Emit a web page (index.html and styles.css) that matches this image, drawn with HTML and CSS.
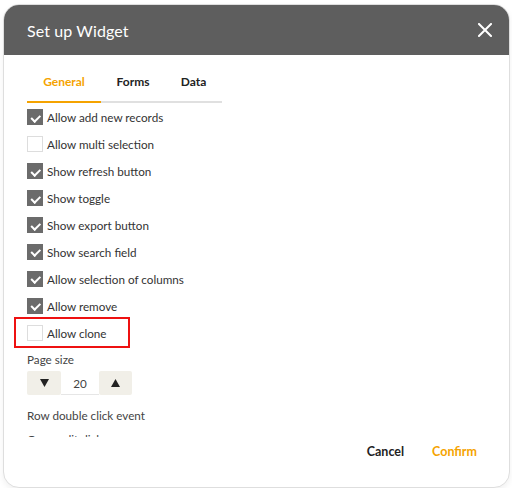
FILE: index.html
```html
<!DOCTYPE html>
<html>
<head>
<meta charset="utf-8">
<link rel="stylesheet" href="styles.css">
</head>
<body>
<div class="dialog">
  <div class="header">
    <span class="title">Set up Widget</span>
    <svg class="close" width="14" height="14" viewBox="0 0 14 14"><path d="M1 1L13 13M13 1L1 13" stroke="#fff" stroke-width="2" stroke-linecap="square"/></svg>
  </div>
  <div class="body">
    <div class="tabs">
      <div class="tab active">General</div>
      <div class="tab">Forms</div>
      <div class="tab">Data</div>
    </div>
    <div class="scroll">
      <div class="row"><span class="cb on"></span><span class="lbl">Allow add new records</span></div>
      <div class="row"><span class="cb"></span><span class="lbl">Allow multi selection</span></div>
      <div class="row"><span class="cb on"></span><span class="lbl">Show refresh button</span></div>
      <div class="row"><span class="cb on"></span><span class="lbl">Show toggle</span></div>
      <div class="row"><span class="cb on"></span><span class="lbl">Show export button</span></div>
      <div class="row"><span class="cb on"></span><span class="lbl">Show search field</span></div>
      <div class="row"><span class="cb on"></span><span class="lbl">Allow selection of columns</span></div>
      <div class="row"><span class="cb on"></span><span class="lbl">Allow remove</span></div>
      <div class="row"><span class="cb"></span><span class="lbl">Allow clone</span><span class="highlight"></span></div>
      <div class="field-label">Page size</div>
      <div class="stepper">
        <span class="step"><svg width="9" height="8" viewBox="0 0 9 8"><path d="M0 0H9L4.5 8Z" fill="#222"/></svg></span>
        <span class="val">20</span>
        <span class="step"><svg width="9" height="8" viewBox="0 0 9 8"><path d="M0 8H9L4.5 0Z" fill="#222"/></svg></span>
      </div>
      <div class="field-label second">Row double click event</div>
      <div class="field-label clipped">Open edit dialog</div>
    </div>
    <div class="footer">
      <span class="btn">Cancel</span>
      <span class="btn primary">Confirm</span>
    </div>
  </div>
</div>
</body>
</html>
```
FILE: styles.css
```css
* { box-sizing: border-box; }
html, body { margin: 0; padding: 0; background: #fff; }
body { font-family: "Lato", "Open Sans", sans-serif; color: #333; }
.dialog {
  margin: 4px 0 0 3px;
  width: 507px;
  height: 484px;
  border: 1px solid #dedede;
  border-radius: 16px;
  overflow: hidden;
  background: #fff;
  box-shadow: 0 3px 6px rgba(0,0,0,0.06);
  display: flex;
  flex-direction: column;
}
.header {
  height: 50px;
  flex: none;
  background: #5e5e5e;
  display: flex;
  align-items: center;
  justify-content: space-between;
  padding: 0 17px 0 23px;
}
.title { color: #fff; font-size: 16px; letter-spacing: 0.1px; }
.close { display: block; }
.body { flex: 1; display: flex; flex-direction: column; padding: 0 0 0 23px; }
.tabs {
  display: flex;
  width: 195px;
  height: 48px;
  border-bottom: 2px solid #e0e0e0;
  flex: none;
}
.tab {
  font-size: 12px;
  font-weight: 700;
  color: #222;
  display: flex;
  align-items: center;
  justify-content: center;
  padding-top: 6px;
  margin-bottom: -2px;
  border-bottom: 2px solid transparent;
}
.tab:nth-child(1) { width: 74px; }
.tab:nth-child(2) { width: 64px; }
.tab:nth-child(3) { width: 57px; }
.tab.active { color: #f5a300; border-bottom-color: #f5a300; }
.scroll {
  height: 334px;
  flex: none;
  overflow: hidden;
  padding: 1px 0 0 20px;
  margin-left: -20px;
  position: relative;
}
.row {
  height: 26.9px;
  display: flex;
  align-items: center;
  position: relative;
}
.cb {
  width: 16px;
  height: 16px;
  border: 1px solid #ddd;
  background: #fff;
  flex: none;
  position: relative;
}
.cb.on { background: #6b6b6b; border-color: #6b6b6b; }
.cb.on::after {
  content: "";
  position: absolute;
  left: 4.5px; top: 2.5px;
  width: 3.5px; height: 6.5px;
  border: solid #fff;
  border-width: 0 2px 2px 0;
  transform: rotate(45deg);
}
.lbl { font-size: 11.7px; margin-left: 4px; color: #333; }
.highlight {
  position: absolute;
  left: -13px; top: -2px;
  width: 116px; height: 31px;
  border: 2px solid #ee1111;
}
.field-label { font-size: 11.7px; color: #444; margin-top: 6px; line-height: 14px; }
.field-label.second { margin-top: 13px; }
.field-label.clipped { margin-top: 10px; }
.stepper {
  display: flex;
  margin-top: 5px;
  height: 24px;
  width: 105px;
}
.step {
  width: 34px;
  background: #f1efe8;
  border-radius: 2px;
  display: flex;
  align-items: center;
  justify-content: center;
}
.step svg { display: block; }
.step:last-child { width: 33px; }
.val {
  width: 38px;
  display: flex;
  align-items: center;
  justify-content: center;
  font-size: 11.7px;
  color: #444;
  border-bottom: 1px solid #e6e6e6;
}
.footer {
  display: flex;
  justify-content: flex-end;
  align-items: center;
  gap: 28px;
  padding-right: 32px;
  margin-top: 1px;
  height: 26px;
}
.btn { font-size: 12.5px; font-weight: 700; color: #222; }
.btn.primary { color: #f5a300; }
```
